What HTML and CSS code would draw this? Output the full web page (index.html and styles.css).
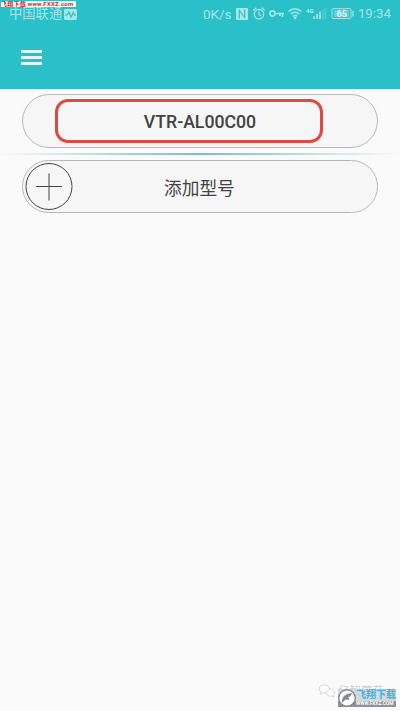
FILE: index.html
```html
<!DOCTYPE html>
<html lang="zh-CN">
<head>
<meta charset="utf-8">
<title>型号</title>
<link rel="stylesheet" href="styles.css">
</head>
<body>
<header class="appbar">
  <div class="status">
    <span class="carrier">中国联通</span>
    <svg class="pulse" width="13" height="11" viewBox="0 0 13 11"><rect width="13" height="11" rx="1.5" fill="#a9e5e7"/><path d="M1 6h2.200L5 3l2 5 2.300-4.500L10.500 6H12" fill="none" stroke="#2ac0c7" stroke-width="1.200"/></svg>
    <span class="speed">0K/s</span>
    <svg class="icons" width="151" height="18" viewBox="235 5 151 18" fill="none" stroke="#a9e5e7" stroke-width="1.300">
      <rect x="236" y="8" width="12" height="12" rx="1" fill="#a9e5e7" stroke="none"/>
      <path d="M239.300 18.500v-8l5.400 7v-8" stroke="#2ac0c7" stroke-width="1.100"/>
      <circle cx="259" cy="14.200" r="4.700"/>
      <path d="M259 11.500v3l2 1.500M253.300 10.500l3-2.700M264.700 10.500l-3-2.700"/>
      <circle cx="272.500" cy="13.500" r="2.600" stroke-width="1.600"/>
      <path d="M275 13.500h9M282.500 13.500v3.500M280 13.500v2.500" stroke-width="1.600"/>
      <path d="M288.500 11.500q6.500-5.500 13 0M290.700 14q4.300-3.600 8.600 0M292.800 16.300q2.200-1.800 4.400 0" stroke-width="1.500"/>
      <circle cx="295" cy="18" r=".7" fill="#a9e5e7"/>
      <path d="M314 19v-2.500M317 19v-5M320 19v-7.500" stroke-width="1.700"/>
      <path d="M323 19V9.500M325.500 19V8" stroke-width="1.400" opacity=".35"/>
      <rect x="332" y="8.700" width="19" height="9.800" rx="1" stroke-width="1"/>
      <rect x="334" y="10.300" width="15" height="6.700" fill="#a9e5e7" stroke="none" opacity=".45"/>
      <path d="M353 11v5.500"/>
      <text class="net" x="306" y="12.500">4G</text>
      <text class="level" x="336.500" y="17.300">65</text>
    </svg>
    <time class="clock">19:34</time>
    <div class="site-tag">飞翔下载 www.FXXZ.com</div>
  </div>
  <div class="menu"><i></i><i></i><i></i></div>
</header>
<main class="models">
  <div class="pill"><div class="selected">VTR-AL00C00</div></div>
  <div class="divider"></div>
  <div class="pill add">
    <svg class="plus" width="48" height="48" viewBox="0 0 48 48" fill="none" stroke="#444"><circle cx="24" cy="23.500" r="23"/><path d="M11 23.500h26M24 10.500v27"/></svg>
    <span>添加型号</span>
  </div>
</main>
<div class="watermark">
  <svg class="chat" width="18" height="14" viewBox="0 0 18 14" fill="#fff" stroke="#c9c9c9" stroke-width=".8"><path d="M2.500 10l.5-2C-.8 5 1.500 1 6 1s7 3.500 4.500 6S6 9 5 8.700z"/><path d="M15.500 13l-.3-1.800C18.500 9 16 5 12.500 5S7 9 9.500 11s4 .8 4.500.8z"/><path d="M4 4h.5M8 4h.5M11 8h.4M14 8h.4"/></svg>
  <span class="author">亿智蘑菇</span>
  <div class="site">
    <svg width="18" height="18" viewBox="0 0 18 18"><circle cx="9" cy="9" r="8.300" fill="#fff" stroke="#85898c" stroke-width="1.400"/><path d="M4 14Q3 5 14 4q-1 4-4 4 2 1 1 3-3-1-4 0-1 1-3 3z" fill="#85898c"/></svg>
    <div class="site-name">飞翔下载</div>
    <div class="site-url">WWW.FXXZ.COM</div>
  </div>
</div>
</body>
</html>
```

FILE: styles.css
```css
* { box-sizing: border-box; }
body {
  margin: 0;
  height: 711px;
  position: relative;
  overflow: hidden;
  background: #fafafa;
  font-family: Roboto, "Noto Sans CJK SC", sans-serif;
}
.appbar { height: 89px; background: #2ac0c7; }
.status {
  position: relative;
  display: flex;
  align-items: center;
  height: 28px;
  padding: 0 9px;
  color: #a9e5e7;
  font-size: 13px;
  line-height: 18px;
}
.carrier { width: 53px; font-size: 13.3px; white-space: nowrap; }
.pulse { margin-left: 2px; }
.speed { width: 32px; margin-left: 126px; font-size: 13.5px; white-space: nowrap; }
.icons { flex: none; }
.clock { margin-left: -28px; font-size: 13.3px; }
.net { font-size: 6px; font-weight: 700; fill: #c5eeef; stroke: none; }
.level { font-size: 9px; font-weight: 700; fill: #e5f8f8; stroke: none; }
.site-tag {
  position: absolute;
  left: 1px;
  top: 1px;
  width: 75px;
  height: 6px;
  background: #fff;
  color: #e01818;
  font-size: 6px;
  font-weight: 700;
  line-height: 6px;
  letter-spacing: .25px;
  white-space: nowrap;
  overflow: hidden;
}
.menu {
  display: flex;
  flex-direction: column;
  gap: 3.5px;
  width: 21px;
  margin: 22px 0 0 21px;
}
.menu i { height: 2.500px; background: #e0f7f7; }
.models { padding: 5px 0 0; }
.pill {
  width: 356px;
  height: 54px;
  margin: 0 22px;
  padding: 4px 0 0 32px;
  border: 1px solid #b8b8b8;
  border-radius: 27px;
  background: #f6f6f6;
  color: #424242;
  font-size: 17.7px;
  font-weight: 500;
}
.selected {
  width: 268px;
  height: 44px;
  padding-left: 22px;
  border: 3px solid #dc4a43;
  border-radius: 13px;
  line-height: 40px;
  text-align: center;
}
.divider {
  height: 2px;
  margin: 5px 0;
  background: linear-gradient(90deg, transparent, #78bfc3 50%, transparent);
}
.add {
  display: flex;
  align-items: center;
  height: 53px;
  padding: 0 0 0 2px;
  font-weight: 400;
}
.add span { margin-left: 91px; }
.watermark {
  position: absolute;
  right: 4px;
  bottom: 4px;
  width: 78px;
  height: 23px;
}
.chat { position: absolute; left: 0; top: 0; }
.author {
  position: absolute;
  left: 20px;
  top: 0;
  color: #d0d0d0;
  font-size: 11.5px;
  line-height: 14px;
}
.site {
  position: absolute;
  left: 20px;
  top: 5px;
  display: grid;
  grid-template-columns: 18px 40px;
  grid-template-rows: 12px 6px;
  background: linear-gradient(#d5d8da 65%, #8d9296 65%);
}
.site svg { grid-row: 1 / 3; }
.site-name {
  color: #36b4e6;
  font-size: 10px;
  font-weight: 700;
  line-height: 11px;
  white-space: nowrap;
}
.site-url {
  color: #fff;
  font-size: 4.800px;
  font-weight: 700;
  line-height: 6px;
  white-space: nowrap;
}
```
